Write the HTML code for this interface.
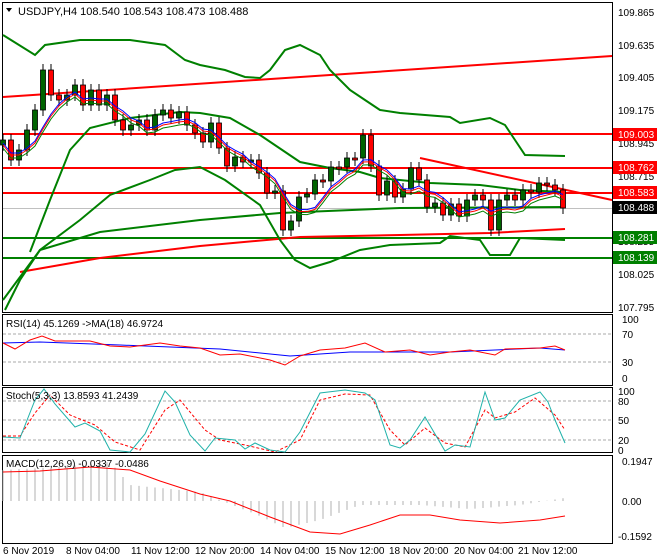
<!DOCTYPE html>
<html><head><meta charset="utf-8"><style>
html,body{margin:0;padding:0;background:#fff;}
svg{display:block;font-family:"Liberation Sans",sans-serif;}
</style></head><body>
<svg id="s" width="660" height="560" viewBox="0 0 660 560" xmlns="http://www.w3.org/2000/svg">
<rect width="660" height="560" fill="#fff"/>
<rect x="2.5" y="2.5" width="610" height="310" fill="none" stroke="#000"/>
<rect x="2.5" y="314.5" width="610" height="71" fill="none" stroke="#000"/>
<rect x="2.5" y="387.5" width="610" height="65" fill="none" stroke="#000"/>
<rect x="2.5" y="455.5" width="610" height="88" fill="none" stroke="#000"/>
<g id="g"></g>
<polygon points="6,8 12,8 9,12" fill="#000"/>
<text x="18" y="15" font-size="11">USDJPY,H4  108.540 108.543 108.473 108.488</text>
<text x="6" y="327" font-size="10">RSI(14) 45.1269  -&gt;MA(18) 46.9724</text>
<text x="6" y="399" font-size="10">Stoch(5,3,3) 13.8593 41.2439</text>
<text x="6" y="467" font-size="10">MACD(12,26,9) -0.0337 -0.0486</text>
<g font-size="10" fill="#000">
<text x="618" y="16">109.865</text>
<text x="618" y="49">109.635</text>
<text x="618" y="81">109.405</text>
<text x="618" y="114">109.175</text>
<text x="618" y="147">108.945</text>
<text x="618" y="180">108.715</text>
<text x="618" y="245">108.255</text>
<text x="618" y="278">108.025</text>
<text x="618" y="311">107.795</text>
<text x="622" y="323">100</text><text x="622" y="338">70</text><text x="622" y="366">30</text><text x="622" y="382">0</text>
<text x="618" y="395">100</text><text x="618" y="405">80</text><text x="618" y="424">50</text><text x="618" y="444">20</text><text x="618" y="454">0</text>
<text x="622" y="465">0.1947</text><text x="622" y="505">0.00</text><text x="618" y="540">-0.1592</text>
</g>
<g font-size="10" fill="#fff">
<rect x="613" y="128" width="44" height="13" fill="#ff0000"/><text x="618" y="138">109.003</text>
<rect x="613" y="161" width="44" height="13" fill="#ff0000"/><text x="618" y="171">108.762</text>
<rect x="613" y="186" width="44" height="13" fill="#ff0000"/><text x="618" y="196">108.583</text>
<rect x="613" y="201" width="44" height="13" fill="#000"/><text x="618" y="211">108.488</text>
<rect x="613" y="231" width="44" height="13" fill="#008000"/><text x="618" y="241">108.281</text>
<rect x="613" y="251" width="44" height="13" fill="#008000"/><text x="618" y="261">108.139</text>
</g>
<g font-size="10" fill="#000">
<text x="3" y="554">6 Nov 2019</text>
<text x="66" y="554">8 Nov 04:00</text>
<text x="131" y="554">11 Nov 12:00</text>
<text x="195" y="554">12 Nov 20:00</text>
<text x="260" y="554">14 Nov 04:00</text>
<text x="325" y="554">15 Nov 12:00</text>
<text x="389" y="554">18 Nov 20:00</text>
<text x="454" y="554">20 Nov 04:00</text>
<text x="518" y="554">21 Nov 12:00</text>
</g>
</svg>
<script>
var g=document.getElementById('g'),o='';
function pl(p,c,w,d){o+='<polyline fill="none" stroke="'+c+'" stroke-width="'+(w||1)+'"'+(d?' stroke-dasharray="'+d+'"':'')+' points="'+p.map(function(a){return a.join(',')}).join(' ')+'"/>';}
function ln(x1,y1,x2,y2,c,w,d){o+='<line x1="'+x1+'" y1="'+y1+'" x2="'+x2+'" y2="'+y2+'" stroke="'+c+'" stroke-width="'+(w||1)+'"'+(d?' stroke-dasharray="'+d+'"':'')+'/>';}
function interp(k,x){for(var i=0;i<k.length-1;i++){if(x>=k[i][0]&&x<=k[i+1][0]){var t=(x-k[i][0])/(k[i+1][0]-k[i][0]);return k[i][1]+t*(k[i+1][1]-k[i][1]);}}return k[k.length-1][1];}
ln(3,208.5,612,208.5,'#c0c0c0',1);
ln(3,134,612,134,'#ff0000',2);ln(3,168,612,168,'#ff0000',2);ln(3,193,612,193,'#ff0000',2);
ln(3,238,612,238,'#008000',2);ln(3,258,612,258,'#008000',2);
ln(3,97,612,56,'#ff0000',2);
ln(420,158,612,200,'#ff0000',2);
pl([[20,272],[100,258],[200,246],[300,237],[400,235],[490,233],[565,229]],'#ff0000',2);
pl([[3,35],[35,55],[45,45],[80,40],[130,40],[165,45],[185,60],[200,65],[225,70],[245,77],[260,78],[270,70],[285,50],[300,45],[320,55],[330,70],[350,90],[365,100],[380,110],[400,113],[450,117],[460,123],[490,118],[505,125],[515,140],[525,155],[565,156]],'#008000',2);
pl([[30,252],[50,200],[70,150],[90,128],[130,118],[180,112],[200,113],[230,118],[260,135],[300,162],[330,168],[360,172],[380,178],[430,183],[480,185],[520,190],[565,192]],'#008000',2);
pl([[5,310],[20,280],[40,250],[80,220],[110,195],[150,180],[175,170],[200,167],[225,180],[260,205],[280,240],[295,260],[310,268],[330,262],[360,250],[390,245],[440,243],[450,236],[480,240],[490,255],[510,255],[520,238],[565,240]],'#008000',2);
pl([[3,300],[40,250],[100,232],[200,220],[280,213],[400,208],[565,207]],'#008000',2);
var V=[140,160,150,130,110,70,95,100,95,85,105,90,105,95,120,130,125,120,130,115,110,118,112,125,133,142,123,148,166,157,162,160,173,193,191,230,221,197,194,180,181,167,167,158,158,135,166,195,181,197,189,168,180,207,203,215,204,216,200,195,200,230,200,195,200,190,192,183,185,190,208];
var K=V.map(function(v,i){return [3+8*i,v];});
var MA1=[],MA2=[],MA3=[];
for(var i=0;i<K.length;i++){var x=K[i][0],c=K[i][1],op=i?K[i-1][1]:c+5;var up=c<op;var t=Math.min(c,op),b=Math.max(c,op);if(b-t<2){b=t+2;}
ln(x,t-6,x,b+6,'#000',1);
o+='<rect x="'+(x-2.5)+'" y="'+t+'" width="5" height="'+(b-t)+'" fill="'+(up?'#006400':'#ff0000')+'" stroke="#000" stroke-width="0.8"/>';
var s=0,n=0;for(var j=Math.max(0,i-4);j<=i;j++){s+=K[j][1];n++;}var m=s/n;
MA1.push([x,m+3]);MA2.push([x,m+5]);MA3.push([x,m+8]);}
pl(MA1,'#0000ff',1);pl(MA2,'#ff0000',1);pl(MA3,'#008000',1);
ln(3,334,612,334,'#aaa',1,'3,2');ln(3,362,612,362,'#aaa',1,'3,2');
var R=[[3,343],[15,349],[30,340],[42,336],[55,341],[90,341],[110,346],[130,347],[160,343],[180,346],[200,348],[220,355],[240,354],[270,360],[285,365],[300,356],[320,350],[345,348],[365,343],[385,352],[410,350],[430,355],[450,352],[470,350],[495,355],[505,349],[540,348],[555,346],[565,350]];
var RM=[[3,343],[40,342],[120,345],[220,349],[290,356],[350,352],[450,352],[540,348],[565,350]];
pl(RM,'#0000ff',1);pl(R,'#ff0000',1);
ln(3,401,612,401,'#aaa',1,'3,2');ln(3,420,612,420,'#aaa',1,'3,2');ln(3,440,612,440,'#aaa',1,'3,2');
var S=[[3,437],[20,438],[35,400],[44,389],[55,404],[75,427],[85,423],[100,431],[110,450],[130,452],[145,434],[165,391],[175,402],[190,435],[205,451],[215,438],[235,440],[245,449],[255,443],[270,450],[285,452],[300,432],[320,393],[345,390],[365,393],[375,400],[390,445],[400,448],[410,440],[425,417],[445,451],[455,445],[470,447],[485,392],[495,420],[505,418],[520,400],[540,392],[548,402],[555,420],[565,443]];
var SD=[[3,436],[20,436],[35,413],[50,395],[70,415],[95,425],[115,442],[140,450],[165,410],[180,400],[205,430],[220,440],[245,445],[275,452],[300,440],[320,400],[345,394],[370,395],[390,430],[405,445],[425,428],[445,443],[465,447],[485,410],[495,418],[515,412],[535,398],[555,415],[565,430]];
pl(SD,'#ff0000',1,'3,2');pl(S,'#20b2aa',1);
for(var x=3;x<=563;x+=8){var h=interp([[3,470],[60,467],[110,462],[130,485],[200,492],[220,500],[260,516],[285,528],[320,520],[360,505],[420,505],[470,509],[520,505],[565,498]],x);ln(x,501,x,h,'#b0b0b0',1);}
pl([[3,472],[40,471],[90,467],[130,470],[160,481],[200,494],[230,501],[270,517],[310,532],[340,534],[370,525],[400,515],[430,515],[460,520],[500,523],[540,520],[565,516]],'#ff0000',1);
g.innerHTML=o;
</script>
</body></html>
